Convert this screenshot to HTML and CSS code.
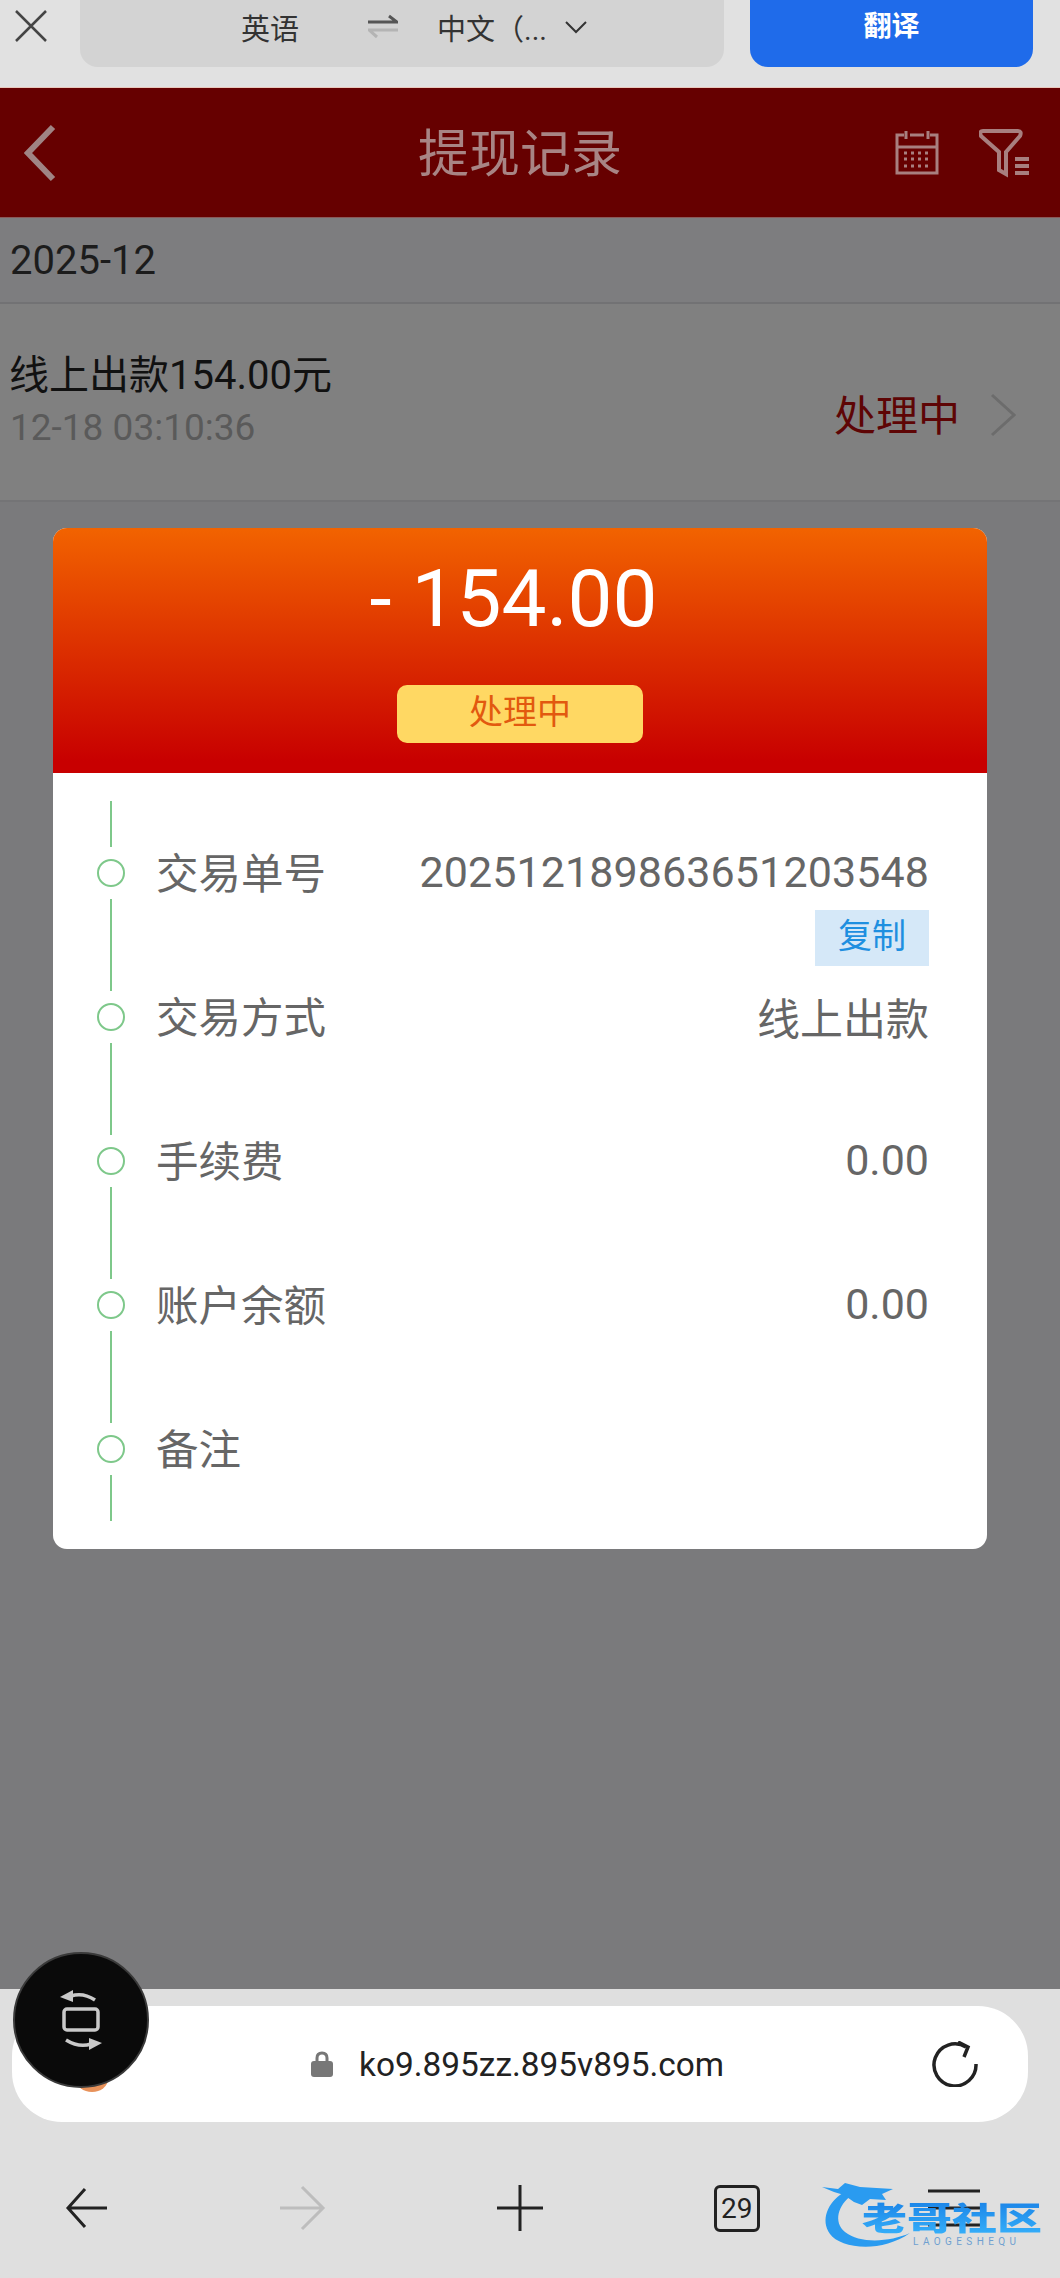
FILE: index.html
```html
<!DOCTYPE html>
<html lang="zh-CN">
<head>
    <meta charset="UTF-8" />
    <meta name="viewport" content="width=device-width, initial-scale=1.0"/>
    <title>提现记录</title>
    <link rel="stylesheet" href="styles.css">
</head>
<body>
<div class="page">
    <div class="translate-bar">
        <svg class="close-icon" viewBox="0 0 32 32"><path d="M1 1L31 31M31 1L1 31"/></svg>
        <div class="lang-pill">
            <span class="lang-from">英语</span>
            <svg class="swap-icon" viewBox="0 0 30 26"><path class="swap-dark" d="M0 8H29L21 2"/><path class="swap-light" d="M30 16H1L9 23"/></svg>
            <span class="lang-to">中文（...</span>
            <svg class="chevron-down" viewBox="0 0 22 14"><path d="M1 2L11 12L21 2"/></svg>
        </div>
        <div class="translate-btn">翻译</div>
    </div>

    <div class="header">
        <svg class="back-icon" viewBox="0 0 32 58"><path d="M29 3L4 29L29 55"/></svg>
        <h1>提现记录</h1>
        <svg class="calendar-icon" viewBox="0 0 44 44">
            <path d="M9 4H2V42H42V4H35M15 4H29M2 16H42"/>
            <path d="M11 0V8M33 0V8"/>
            <path class="dots" d="M9 22H35M9 28H35M9 35H35"/>
        </svg>
        <svg class="filter-icon" viewBox="0 0 50 50">
            <path d="M4 3H39Q43 3 41 8L27 24V46L20 42V24L2 8Q0 3 4 3Z"/>
            <path d="M36 31H50M36 38H50M36 45H50"/>
        </svg>
    </div>

    <div class="content">
        <div class="month">2025-12</div>
        <div class="record">
            <div class="record-left">
                <div class="record-title">线上出款154.00元</div>
                <div class="record-time">12-18 03:10:36</div>
            </div>
            <div class="record-status">处理中</div>
            <svg class="record-arrow" viewBox="0 0 26 44"><path d="M2 2L24 22L2 42"/></svg>
        </div>

        <div class="card">
            <div class="card-top">
                <div class="amount">- 154.00</div>
                <div class="badge">处理中</div>
            </div>
            <div class="card-body">
                <div class="step">
                    <div class="rail"><i></i><b></b><i></i></div>
                    <div class="step-label">交易单号</div>
                    <div class="step-value">
                        <div class="order-no">202512189863651203548</div>
                        <span class="copy-btn">复制</span>
                    </div>
                </div>
                <div class="step">
                    <div class="rail"><i></i><b></b><i></i></div>
                    <div class="step-label">交易方式</div>
                    <div class="step-value cn">线上出款</div>
                </div>
                <div class="step">
                    <div class="rail"><i></i><b></b><i></i></div>
                    <div class="step-label">手续费</div>
                    <div class="step-value">0.00</div>
                </div>
                <div class="step">
                    <div class="rail"><i></i><b></b><i></i></div>
                    <div class="step-label">账户余额</div>
                    <div class="step-value">0.00</div>
                </div>
                <div class="step">
                    <div class="rail"><i></i><b></b><i></i></div>
                    <div class="step-label">备注</div>
                    <div class="step-value"></div>
                </div>
            </div>
        </div>
    </div>

    <div class="browser-bar">
        <div class="url-bar">
            <svg class="lock-icon" viewBox="0 0 22 26"><path class="shackle" d="M6 12V7Q6 2 11 2Q16 2 16 7V12"/><rect y="10" width="22" height="16" rx="3"/></svg>
            <span class="url-text">ko9.895zz.895v895.com</span>
            <svg class="reload-icon" viewBox="0 0 46 46"><path d="M34 6A21 21 0 1 0 44 23"/><path d="M26 1L36 6L32 16"/></svg>
        </div>
        <div class="nav">
            <svg class="nav-icon" viewBox="0 0 46 46"><path d="M23 4L6 23L23 42M6 23H45"/></svg>
            <svg class="nav-icon disabled" viewBox="0 0 46 46"><path d="M23 2L44 23L23 44M1 23H44"/></svg>
            <svg class="nav-icon" viewBox="0 0 46 46"><path d="M23 0V46M0 23H46"/></svg>
            <div class="tabs-count">29</div>
            <svg class="nav-icon" viewBox="0 0 46 46"><path d="M-3 6H49M-3 23H49M-3 40H49"/></svg>
        </div>
    </div>

    <!-- favicon stuck under the floating button -->
    <div class="favicon-peek"></div>
    <div class="float-btn">
        <svg viewBox="0 0 48 72">
            <path class="float-line" d="M14 12Q26 8 38 16"/>
            <path class="float-fill" d="M3 13L16 6V18Z"/>
            <rect class="float-line" x="7" y="25" width="34" height="21" rx="3"/>
            <path class="float-line" d="M9 56Q22 64 34 60"/>
            <path class="float-fill" d="M45 59L32 66V54Z"/>
        </svg>
    </div>

    <div class="watermark">
        <svg viewBox="0 0 100 80">
            <path d="M23 13C8 22 0 40 10 54C20 68 60 74 90 53C70 62 40 64 25 52C13 42 18 25 32 15Z"/>
            <path d="M2 7L18 9L25 3L40 7L73 9L62 14L66 20L50 19L42 25L34 22L24 15L14 12Z"/>
        </svg>
        <div class="wm-name">老哥社区</div>
        <div class="wm-sub">LAOGESHEQU</div>
    </div>
</div>
</body>
</html>
```

FILE: styles.css
```css
* {
    box-sizing: border-box;
}
body {
    margin: 0;
    font-family: Roboto, 'Noto Sans CJK SC', sans-serif;
}
.page {
    position: relative;
    display: flex;
    flex-direction: column;
    width: 1060px;
    height: 2278px;
    overflow: hidden;
    background: #7a7a7c;
}

/* translate bar */
.translate-bar {
    display: flex;
    height: 88px;
    background: #e1e1e1;
    border-bottom: 1px solid #e8c8bc;
}
.close-icon {
    width: 32px;
    height: 32px;
    margin: 10px 0 0 15px;
    fill: none;
    stroke: #444;
    stroke-width: 2.5;
}
.lang-pill {
    display: flex;
    align-items: center;
    width: 644px;
    height: 67px;
    margin-left: 33px;
    padding-left: 161px;
    padding-bottom: 13px;
    background: #d3d3d3;
    border-radius: 0 0 18px 18px;
    font-size: 29px;
    color: #333;
}
.lang-from {
    width: 127px;
}
.swap-icon {
    width: 30px;
    height: 26px;
    fill: none;
    stroke-width: 3;
}
.swap-dark {
    stroke: #555;
}
.swap-light {
    stroke: #b4b4b4;
}
.lang-to {
    margin-left: 39px;
    width: 128px;
    white-space: nowrap;
}
.chevron-down {
    width: 22px;
    height: 14px;
    fill: none;
    stroke: #333;
    stroke-width: 2;
}
.translate-btn {
    width: 283px;
    height: 67px;
    margin-left: 26px;
    padding-top: 8px;
    background: #1f6bea;
    border-radius: 0 0 18px 18px;
    color: #fff;
    font-size: 28px;
    font-weight: 700;
    line-height: 38px;
    text-align: center;
}

/* page header */
.header {
    position: relative;
    display: flex;
    align-items: center;
    height: 130px;
    padding-left: 24px;
    background: #660000;
    border-bottom: 1px solid #8a5a5a;
}
.back-icon {
    width: 32px;
    height: 58px;
    fill: none;
    stroke: #a08484;
    stroke-width: 6;
}
.header h1 {
    margin: 5px 0 0 362px;
    width: 205px;
    font-size: 51px;
    font-weight: 400;
    line-height: 60px;
    color: #a88484;
    white-space: nowrap;
}
.calendar-icon {
    width: 44px;
    height: 44px;
    margin-left: 272px;
    fill: none;
    stroke: #a87f7f;
    stroke-width: 3;
}
.calendar-icon .dots {
    stroke-dasharray: 3 4;
}
.filter-icon {
    width: 50px;
    height: 50px;
    margin-left: 40px;
    fill: none;
    stroke: #a87f7f;
    stroke-width: 4;
}

/* list behind the dialog */
.content {
    flex: 1;
}
.month {
    height: 86px;
    padding-left: 10px;
    border-bottom: 2px solid #727274;
    background: #7d7d7f;
    font-size: 40px;
    line-height: 86px;
    color: #1c1c1c;
}
.record {
    display: flex;
    align-items: center;
    height: 198px;
    padding: 0 44px 0 10px;
    background: #808080;
    border-bottom: 2px solid #747476;
}
.record-left {
    flex: 1;
}
.record-title {
    margin-left: -1px;
    font-size: 40px;
    line-height: 50px;
    color: #111;
}
.record-time {
    margin-top: 2px;
    font-size: 37px;
    line-height: 50px;
    color: #5a5a5a;
}
.record-status {
    margin-top: 20px;
    font-size: 42px;
    color: #5e0505;
}
.record-arrow {
    width: 26px;
    height: 44px;
    margin: 25px 0 0 30px;
    fill: none;
    stroke: #6c6c6c;
    stroke-width: 3;
}

/* dialog */
.card {
    width: 934px;
    margin: 26px 0 0 53px;
    border-radius: 14px;
    overflow: hidden;
    background: #fff;
}
.card-top {
    display: flex;
    flex-direction: column;
    align-items: center;
    height: 245px;
    padding-top: 24px;
    background: linear-gradient(#f26300, #c80000 95%);
}
.amount {
    margin-left: -13px;
    font-size: 80px;
    line-height: 94px;
    color: #fff;
}
.badge {
    width: 246px;
    height: 58px;
    margin-top: 39px;
    background: #ffd863;
    border-radius: 10px;
    font-size: 34px;
    line-height: 54px;
    color: #e2590f;
    text-align: center;
}
.card-body {
    padding: 28px 58px 28px 43px;
}
.step {
    display: flex;
    height: 144px;
}
.rail {
    display: flex;
    flex-direction: column;
    align-items: center;
    width: 30px;
    margin-right: 30px;
}
.rail i {
    width: 2px;
    height: 46px;
    background: #7ec88a;
}
.rail b {
    width: 28px;
    height: 28px;
    margin: 12px 0;
    border: 2px solid #7ec88a;
    border-radius: 50%;
}
.step-label {
    padding-top: 46px;
    font-size: 42.5px;
    line-height: 56px;
    color: #666;
}
.step-value {
    flex: 1;
    padding-top: 43px;
    font-size: 43px;
    line-height: 56px;
    color: #666;
    text-align: right;
}
.step-value.cn {
    padding-top: 47px;
}
.order-no {
    letter-spacing: 0.1px;
}
.copy-btn {
    display: inline-block;
    width: 114px;
    height: 56px;
    margin-top: 10px;
    background: #d5e8f8;
    font-size: 34px;
    line-height: 52px;
    color: #1e8fe0;
    text-align: center;
}

/* browser chrome */
.browser-bar {
    height: 289px;
    padding-top: 17px;
    background: #dfdfdf;
}
.url-bar {
    display: flex;
    align-items: center;
    width: 1016px;
    height: 116px;
    margin-left: 12px;
    padding-left: 299px;
    background: #fff;
    border-radius: 50px;
}
.lock-icon {
    width: 22px;
    height: 26px;
    margin-right: 26px;
    fill: #777;
}
.lock-icon .shackle {
    fill: none;
    stroke: #777;
    stroke-width: 3;
}
.url-text {
    width: 573px;
    font-size: 33.4px;
    color: #222;
    white-space: nowrap;
}
.reload-icon {
    width: 46px;
    height: 46px;
    fill: none;
    stroke: #222;
    stroke-width: 3.5;
}
.nav {
    display: flex;
    align-items: center;
    justify-content: space-between;
    height: 120px;
    margin-top: 26px;
    padding: 0 83px 0 62px;
}
.nav-icon {
    width: 46px;
    height: 46px;
    overflow: visible;
    fill: none;
    stroke: #222;
    stroke-width: 3;
}
.nav-icon.disabled {
    stroke: #bdbdbd;
}
.tabs-count {
    width: 46px;
    height: 47px;
    border: 3px solid #222;
    border-radius: 6px;
    font-size: 28px;
    line-height: 41px;
    color: #222;
    text-align: center;
}

/* overlays */
.favicon-peek {
    position: absolute;
    left: 76px;
    top: 2066px;
    width: 32px;
    height: 26px;
    border-radius: 50%;
    background: #e8925a;
}
.float-btn {
    position: absolute;
    left: 13px;
    top: 1952px;
    display: flex;
    align-items: center;
    justify-content: center;
    width: 136px;
    height: 136px;
    border-radius: 50%;
    background: #0a0a0a;
    border: 2px solid #3a3a3a;
}
.float-btn svg {
    width: 48px;
    height: 72px;
}
.float-line {
    fill: none;
    stroke: #c9c9c9;
    stroke-width: 3.5;
}
.float-fill {
    fill: #c9c9c9;
}
.watermark {
    position: absolute;
    left: 820px;
    top: 2180px;
    width: 240px;
    height: 80px;
}
.watermark svg {
    position: absolute;
    left: 0;
    top: 0;
    width: 100px;
    height: 80px;
    fill: #2a9bf0;
}
.wm-name {
    position: absolute;
    left: 42px;
    top: 16px;
    font-size: 45px;
    font-weight: 900;
    line-height: 46px;
    white-space: nowrap;
    background: linear-gradient(#1c86e8, #36b0fa);
    -webkit-background-clip: text;
    background-clip: text;
    color: transparent;
    transform: scaleY(0.72);
}
.wm-sub {
    position: absolute;
    left: 93px;
    top: 56px;
    font-size: 10px;
    line-height: 12px;
    letter-spacing: 4.4px;
    color: #6f9fd0;
    white-space: nowrap;
}
```
